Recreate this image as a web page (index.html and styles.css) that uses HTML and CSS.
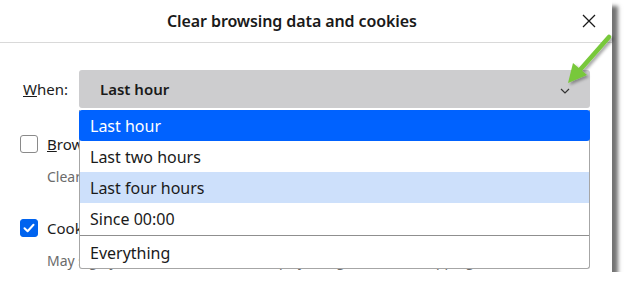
FILE: index.html
```html
<!DOCTYPE html>
<html>
<head>
<meta charset="utf-8">
<link rel="stylesheet" href="styles.css">
</head>
<body>
<div class="dialog">
  <div class="header">
    <div class="title">Clear browsing data and cookies</div>
    <div class="close">
      <svg width="14" height="14" viewBox="0 0 14 14"><path d="M1 1L13 13M13 1L1 13" stroke="#1a1a1a" stroke-width="1.3" fill="none"/></svg>
    </div>
  </div>
  <div class="content">
    <div class="when-row">
      <span class="when-label"><u>W</u>hen:</span>
      <div class="select">
        <span class="select-value">Last hour</span>
        <svg class="chevron" width="10" height="6" viewBox="0 0 10 6"><path d="M1 1L5 5L9 1" stroke="#333" stroke-width="1.2" fill="none"/></svg>
      </div>
    </div>
    <div class="option">
      <span class="checkbox"></span>
      <div class="opt-text">
        <div class="opt-title"><u>B</u>rowsing history</div>
        <div class="opt-desc">Clears history from all synced devices</div>
      </div>
    </div>
    <div class="option second">
      <span class="checkbox checked">
        <svg width="12" height="10" viewBox="0 0 12 10"><path d="M1.5 5.2L4.6 8.2L10.5 1.8" stroke="#fff" stroke-width="2" fill="none" stroke-linecap="round" stroke-linejoin="round"/></svg>
      </span>
      <div class="opt-text">
        <div class="opt-title">Cookies and other site data</div>
        <div class="opt-desc">May sign you out of most sites. Keeps you signed in for shopping</div>
      </div>
    </div>
  </div>
  <ul class="dropdown">
    <li class="item selected">Last hour</li>
    <li class="item">Last two hours</li>
    <li class="item hover">Last four hours</li>
    <li class="item">Since 00:00</li>
    <li class="sep"></li>
    <li class="item">Everything</li>
  </ul>
  <svg class="arrow" width="60" height="70" viewBox="0 0 60 70">
    <defs>
      <filter id="sh" x="-30%" y="-30%" width="160%" height="160%">
        <feDropShadow dx="2" dy="2" stdDeviation="1.5" flood-color="#000" flood-opacity="0.35"/>
      </filter>
    </defs>
    <g filter="url(#sh)">
      <path d="M52 4L22 38" stroke="#78c83a" stroke-width="4.5" stroke-linecap="round" fill="none"/>
      <path d="M11 50L16 30L30 42Z" fill="#78c83a"/>
    </g>
  </svg>
</div>
</body>
</html>
```
FILE: styles.css
```css
* { box-sizing: border-box; }
body {
  margin: 0;
  background: #fff;
  font-family: "Noto Sans", "Open Sans", sans-serif;
  color: #1b1b1b;
}
.dialog {
  position: relative;
  width: 612px;
  height: 272px;
  background: #fff;
  box-shadow: 6px 6px 4px rgba(0,0,0,0.55);
}
.header {
  height: 43px;
  border-bottom: 1px solid #d9d9d9;
  display: flex;
  align-items: center;
  padding-left: 167px;
  padding-right: 15px;
}
.title {
  flex: 1;
  font-size: 16px;
  font-weight: 600;
  color: #1a1a1a;
  letter-spacing: -0.1px;
}
.close {
  width: 14px;
  height: 14px;
  display: flex;
  margin-right: 1px;
}
.content {
  padding: 27px 22px 0 20px;
}
.when-row {
  display: flex;
  align-items: center;
  gap: 11px;
  padding-left: 3px;
}
.when-label {
  font-size: 15px;
  color: #1b1b1b;
}
.select {
  width: 511px;
  height: 38px;
  background: #cdcdcf;
  border-radius: 3px;
  display: flex;
  align-items: center;
  justify-content: space-between;
  padding: 0 20px 0 21px;
}
.select-value {
  font-size: 15px;
  font-weight: 600;
  color: #1a1a1a;
}
.chevron { margin-top: 3px; }
.option {
  display: flex;
  gap: 9px;
  margin-top: 26px;
}
.option.second { margin-top: 32px; }
.checkbox {
  width: 18px;
  height: 18px;
  border: 1px solid #8a8a8a;
  border-radius: 3px;
  margin-top: 1px;
  flex: none;
  display: flex;
  align-items: center;
  justify-content: center;
}
.checkbox.checked {
  background: #0063ef;
  border-color: #0063ef;
}
.opt-title {
  font-size: 15px;
  line-height: 20px;
}
.opt-desc {
  font-size: 14px;
  color: #6b6b6b;
  margin-top: 14px;
  line-height: 18px;
}
.dropdown {
  position: absolute;
  left: 79px;
  top: 110px;
  width: 511px;
  margin: 0;
  padding: 0;
  list-style: none;
  background: #fff;
  border: 1px solid #a6a6a6;
  border-top: none;
  border-radius: 0 0 3px 3px;
  font-size: 16px;
  color: #1a1a1a;
}
.item {
  height: 31px;
  display: flex;
  align-items: center;
  padding-left: 10px;
}
.item.selected {
  background: #0062ff;
  color: #fff;
  border-radius: 3px;
  margin: 0 -1px;
  padding-left: 11px;
}
.item.hover { background: #cde0fb; }
.sep {
  height: 2px;
  border-top: 1px solid #8f8f8f;
  margin: 1px 0 0;
}
.arrow {
  position: absolute;
  left: 557px;
  top: 33px;
}
```
